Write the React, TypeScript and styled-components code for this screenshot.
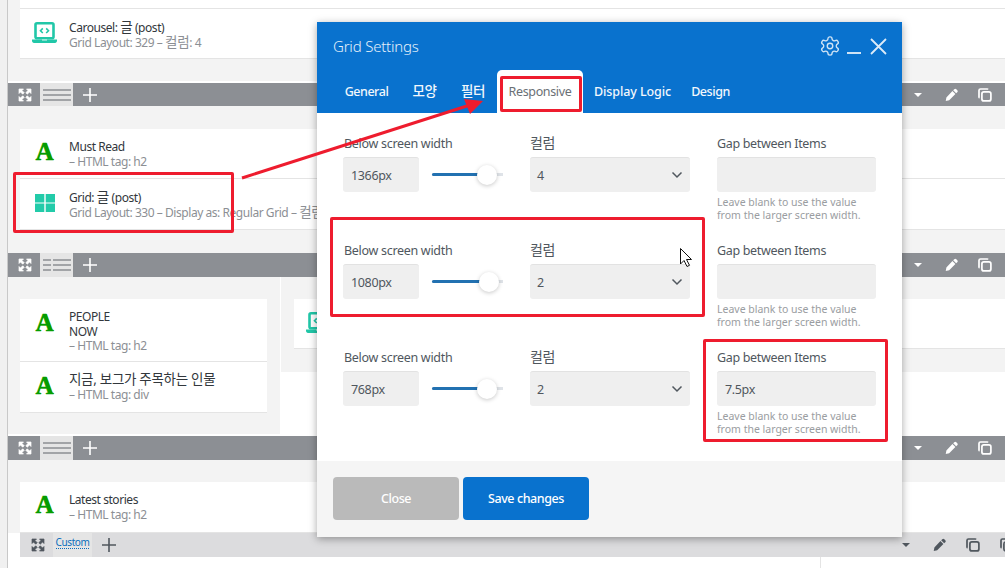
import React from "react";
import styled, { createGlobalStyle } from "styled-components";

const Global = createGlobalStyle`
  html, body { margin: 0; padding: 0; height: 568px; overflow: hidden; background: #fff; }
  * { box-sizing: border-box; }
  body { font-family: "Noto Sans", "Noto Sans CJK KR", sans-serif; }
`;

const Page = styled.div`
  position: relative;
  width: 1005px;
  height: 568px;
  overflow: hidden;
  display: flex;
`;
const SideEdge = styled.div`
  width: 8px;
  flex: none;
  background: #f0f0f0;
  border-right: 1px solid #c8c8c8;
`;
const Main = styled.div`
  flex: 1;
  min-width: 0;
  display: flex;
  flex-direction: column;
`;
const Section = styled.section<{ $h: number; $top: number }>`
  height: ${(p) => p.$h}px;
  padding: ${(p) => p.$top}px 0 0 12px;
  background: #f3f3f3;
  flex: none;
`;
const Columns = styled.div`
  height: 157px;
  flex: none;
  display: flex;
  background: #fff;
`;
const LeftCol = styled.div`
  width: 272px;
  height: 157px;
  padding: 22px 13px 0 12px;
  background: #f3f3f3;
`;
const RightCol = styled.div`
  margin-left: 1px;
  flex: 1;
  height: 95px;
  padding: 22px 0 0 13px;
  background: #f3f3f3;
`;
const Card = styled.div<{ $h: number; $pt?: number }>`
  height: ${(p) => p.$h}px;
  display: flex;
  align-items: flex-start;
  padding-top: ${(p) => p.$pt ?? 11}px;
  background: #fff;
  border-bottom: 1px solid #e4e4e4;
  overflow: hidden;
  white-space: nowrap;
`;
const IconSlot = styled.div<{ $mt?: number }>`
  width: 49px;
  flex: none;
  display: flex;
  justify-content: center;
  margin-top: ${(p) => p.$mt ?? 0}px;
`;
const AGlyph = styled.span`
  font-family: "Liberation Serif", serif;
  font-weight: 700;
  font-size: 25px;
  line-height: 28px;
  color: #039c03;
  -webkit-text-stroke: 0.4px #039c03;
  text-shadow: 0.5px 0 0.5px #a8c400;
`;
const CardText = styled.div`
  font-size: 12px;
  line-height: 14.5px;
`;
const CardTitle = styled.div`
  color: #32373c;
  letter-spacing: -0.45px;
`;
const CardSub = styled.div`
  color: #8c8f94;
  letter-spacing: -0.45px;
`;
const Ko = styled.span<{ $size?: number }>`
  font-size: ${(p) => p.$size ?? 13.5}px;
  line-height: 0;
  letter-spacing: -0.3px;
`;

const Bar = styled.div<{ $mt: number; $h?: number }>`
  height: ${(p) => p.$h ?? 24}px;
  flex: none;
  margin-top: ${(p) => p.$mt}px;
  background: #8c8f94;
  display: flex;
  align-items: center;
  padding: 0 13px 0 10px;
  color: #fff;
`;
const ExpandSlot = styled.div`
  width: 22px;
  display: flex;
  justify-content: flex-start;
`;
const ListTile = styled.div`
  width: 33px;
  height: 100%;
  background: #e5e5e5;
  display: flex;
  align-items: center;
  justify-content: center;
`;
const PlusSlot = styled.div`
  margin-left: 10px;
  display: flex;
`;
const Tools = styled.div`
  margin-left: auto;
  display: flex;
  align-items: center;
  gap: 20px;
`;
const CaretSlot = styled.div`
  display: flex;
  margin-right: 3px;
`;

const SubBar = styled.div`
  height: 24px;
  margin-left: 12px;
  flex: none;
  background: #dcdcde;
  display: flex;
  align-items: center;
  padding: 0 0 0 11px;
  color: #50575e;
  width: 1000px;
`;
const CustomTile = styled.div`
  width: 39px;
  height: 24px;
  background: #e5e5e5;
  display: flex;
  align-items: flex-start;
  justify-content: center;
  padding-top: 3px;
`;
const CustomLink = styled.span`
  font-size: 10px;
  line-height: 12px;
  color: #0a6ebd;
  border-bottom: 1px dotted #0a6ebd;
  letter-spacing: -0.4px;
`;
const SubPlus = styled.div`
  margin-left: 10px;
  display: flex;
`;
const SubTools = styled.div`
  margin-left: 786px;
  display: flex;
  align-items: center;
  gap: 20px;
`;
const Bottom = styled.div`
  flex: 1;
  display: flex;
  justify-content: flex-end;
`;
const BottomRule = styled.div`
  width: 185px;
  border-left: 1px solid #e4e4e4;
`;

/* Modal */
const Modal = styled.div`
  position: absolute;
  left: 317px;
  top: 22px;
  width: 585px;
  height: 515px;
  background: #fff;
  box-shadow: 0 2px 8px rgba(0, 0, 0, 0.35);
  display: flex;
  flex-direction: column;
`;
const Header = styled.div`
  height: 91px;
  flex: none;
  background: #0972ce;
  display: flex;
  flex-direction: column;
  color: #fff;
`;
const TitleRow = styled.div`
  height: 48px;
  display: flex;
  align-items: center;
  padding: 0 15px 0 16px;
`;
const Title = styled.div`
  font-size: 15px;
  font-weight: 300;
  color: #e4f0fa;
  letter-spacing: -0.2px;
`;
const HeadIcons = styled.div`
  margin-left: auto;
  display: flex;
  align-items: center;
`;
const Tabs = styled.div`
  margin-top: auto;
  height: 43px;
  display: flex;
  padding-left: 16px;
`;
const Tab = styled.div<{ $active?: boolean; $w: number; $ls?: number }>`
  width: ${(p) => p.$w}px;
  flex: none;
  height: 43px;
  padding-top: 13px;
  text-align: center;
  font-size: 12.5px;
  line-height: 18px;
  font-weight: ${(p) => (p.$active ? 400 : 500)};
  letter-spacing: ${(p) => p.$ls ?? -0.45}px;
  white-space: nowrap;
  border-radius: 5px 5px 0 0;
  color: ${(p) => (p.$active ? "#6a6f75" : "#f2f7fc")};
  background: ${(p) => (p.$active ? "#fff" : "transparent")};
`;
const Body = styled.div`
  flex: 1;
  padding: 21px 0 0 26px;
  display: flex;
  flex-direction: column;
`;
const Row = styled.div`
  height: 107px;
  flex: none;
  display: grid;
  grid-template-columns: 187px 187px 160px;
  align-items: start;
`;
const Label = styled.div`
  font-size: 12.5px;
  line-height: 18px;
  color: #50575e;
  letter-spacing: -0.3px;
  margin: 1px 0 4px 1px;
  white-space: nowrap;
`;
const KoLabel = styled(Label)`
  margin-left: 0;
`;
const GapLabel = styled(Label)`
  margin-left: 0;
  letter-spacing: -0.33px;
`;
const Inline = styled.div`
  display: flex;
  align-items: center;
  gap: 13px;
`;
const Input = styled.div<{ $w: number }>`
  width: ${(p) => p.$w}px;
  height: 35px;
  flex: none;
  padding: 0 8px;
  background: #efefef;
  border-radius: 3px;
  border-top: 1px solid #e2e2e2;
  display: flex;
  align-items: center;
  font-size: 12.5px;
  letter-spacing: -0.35px;
  color: #50575e;
`;
const Select = styled(Input)`
  justify-content: space-between;
  padding-left: 7px;
  padding-right: 7px;
`;
const Slider = styled.div`
  position: relative;
  width: 71px;
  height: 3px;
  background: #dfe3e8;
`;
const SliderFill = styled.div`
  height: 3px;
  background: #2271b1;
  border-radius: 2px;
`;
const Knob = styled.div`
  position: absolute;
  top: -8px;
  width: 20px;
  height: 20px;
  margin-left: -10px;
  border-radius: 50%;
  background: #fff;
  box-shadow: 0 1px 4px rgba(0, 0, 0, 0.22);
`;
const Help = styled.div`
  margin-top: 4px;
  font-size: 10.5px;
  line-height: 13.3px;
  color: #9a9da1;
  white-space: nowrap;
`;
const Footer = styled.div`
  height: 76px;
  margin-top: auto;
  flex: none;
  background: #f5f5f5;
  padding: 16px;
  display: flex;
  gap: 4px;
`;
const Btn = styled.div<{ $primary?: boolean }>`
  width: 126px;
  height: 43px;
  border-radius: 4px;
  background: ${(p) => (p.$primary ? "#0972ce" : "#bababa")};
  color: #fff;
  display: flex;
  align-items: center;
  justify-content: center;
  font-size: 12.5px;
  letter-spacing: -0.42px;
  font-weight: 500;
`;

/* annotations */
const RedBox = styled.div<{ $x: number; $y: number; $w: number; $h: number }>`
  position: absolute;
  left: ${(p) => p.$x}px;
  top: ${(p) => p.$y}px;
  width: ${(p) => p.$w}px;
  height: ${(p) => p.$h}px;
  border: 3px solid #ee1c2e;
  border-radius: 2px;
`;
const Overlay = styled.svg`
  position: absolute;
  left: 0;
  top: 0;
  pointer-events: none;
`;
const MinusIcon = styled.svg`
  margin-left: 6px;
`;
const CrossIcon = styled.svg`
  margin-left: 9px;
`;

const Expand = ({ c = "#fff" }: { c?: string }) => (
  <svg width="14" height="14" viewBox="0 0 14 14" fill={c} stroke={c} strokeWidth="0.7">
    <path d="M1 1h4.500L4 2.500 6.200 4.700 4.700 6.200 2.500 4 1 5.500zM13 1v4.500L11.500 4 9.300 6.200 7.800 4.700 10 2.500 8.500 1zM1 13V8.500L2.500 10l2.200-2.200 1.500 1.500L4 11.500 5.500 13zM13 13H8.500l1.500-1.500-2.200-2.200 1.500-1.500 2.200 2.200L13 8.500z" />
  </svg>
);
const Plus = ({ c = "#fff" }: { c?: string }) => (
  <svg width="14" height="14" viewBox="0 0 14 14" stroke={c} strokeWidth="1.6">
    <path d="M7 0v14M0 7h14" />
  </svg>
);
const Lines = ({ split }: { split?: boolean }) => (
  <svg width="28" height="14" viewBox="0 0 28 14" stroke="#a2a4a7" strokeWidth="2">
    {[2, 7, 12].map((y) =>
      split ? (
        <g key={y}>
          <path d={`M0 ${y}h8`} />
          <path d={`M10 ${y}h18`} />
        </g>
      ) : (
        <path key={y} d={`M0 ${y}h28`} />
      )
    )}
  </svg>
);
const Caret = ({ c = "#fff" }: { c?: string }) => (
  <svg width="8" height="4" viewBox="0 0 8 4" fill={c}>
    <path d="M0 0h8L4 4z" />
  </svg>
);
const Pencil = ({ c = "#fff" }: { c?: string }) => (
  <svg width="13" height="14" viewBox="0 0 14 14" fill={c}>
    <path d="M10 .8a1.600 1.600 0 0 1 2.200 0l1 1a1.600 1.600 0 0 1 0 2.200L12 5.200 8.800 2zM8 2.800 11.200 6l-6.700 6.700L.8 13.400l.7-3.800z" />
  </svg>
);
const Copy = ({ c = "#fff" }: { c?: string }) => (
  <svg width="14" height="14" viewBox="0 0 14 14" fill="none" stroke={c} strokeWidth="1.7">
    <path d="M10 1.500A1 1 0 0 0 9 1H2.500A1.500 1.500 0 0 0 1 2.500V9a1 1 0 0 0 .6.9" />
    <rect x="3.900" y="3.900" width="9" height="9" rx="2" />
  </svg>
);
const Chevron = () => (
  <svg width="12" height="8" viewBox="0 0 12 8" fill="none" stroke="#50575e" strokeWidth="1.500">
    <path d="M1.500 1.500 6 6l4.500-4.500" />
  </svg>
);
const Laptop = () => (
  <svg width="25" height="21" viewBox="0 0 25 21">
    <rect x="3.500" y="1.300" width="18" height="15" rx="1.500" fill="#fff" stroke="#21c7a8" strokeWidth="2.600" />
    <path d="M10.800 6.400 8.500 8.700l2.300 2.300M14.200 6.400l2.300 2.300-2.300 2.300" fill="none" stroke="#21c7a8" strokeWidth="1.600" />
    <path d="M0 17.500h25v1c0 1.400-.8 2.500-2 2.500H2c-1.200 0-2-1.100-2-2.500z" fill="#21c7a8" />
    <path d="M10 17.500h5v1h-5z" fill="#dff7f2" />
  </svg>
);
const GridIcon = () => (
  <svg width="20" height="18" viewBox="0 0 20 18" fill="#22cba9">
    <rect x="0" y="0" width="9.300" height="8.500" />
    <rect x="10.700" y="0" width="9.300" height="8.500" />
    <rect x="0" y="9.500" width="9.300" height="8.500" />
    <rect x="10.700" y="9.500" width="9.300" height="8.500" />
  </svg>
);
const Gear = () => (
  <svg width="22" height="22" viewBox="0 0 24 24" fill="none" stroke="#cfe3f5" strokeWidth="1.500" strokeLinecap="round" strokeLinejoin="round">
    <path d="M12.220 2h-.44a2 2 0 0 0-2 2v.18a2 2 0 0 1-1 1.730l-.43.25a2 2 0 0 1-2 0l-.15-.08a2 2 0 0 0-2.730.73l-.22.380a2 2 0 0 0 .73 2.730l.15.100a2 2 0 0 1 1 1.720v.510a2 2 0 0 1-1 1.740l-.15.090a2 2 0 0 0-.73 2.730l.22.380a2 2 0 0 0 2.730.73l.15-.08a2 2 0 0 1 2 0l.43.250a2 2 0 0 1 1 1.730V20a2 2 0 0 0 2 2h.44a2 2 0 0 0 2-2v-.18a2 2 0 0 1 1-1.730l.43-.25a2 2 0 0 1 2 0l.15.080a2 2 0 0 0 2.730-.73l.22-.390a2 2 0 0 0-.73-2.730l-.15-.080a2 2 0 0 1-1-1.740v-.500a2 2 0 0 1 1-1.740l.15-.090a2 2 0 0 0 .73-2.730l-.22-.380a2 2 0 0 0-2.730-.73l-.15.080a2 2 0 0 1-2 0l-.43-.250a2 2 0 0 1-1-1.730V4a2 2 0 0 0-2-2z" />
    <circle cx="12" cy="12" r="3" />
  </svg>
);
const Minus = () => (
  <MinusIcon width="14" height="22" viewBox="0 0 14 22" stroke="#cfe3f5" strokeWidth="2">
    <path d="M0 18h14" />
  </MinusIcon>
);
const Cross = () => (
  <CrossIcon width="17" height="17" viewBox="0 0 17 17" stroke="#dcebf8" strokeWidth="1.800">
    <path d="M1 1l15 15M16 1 1 16" />
  </CrossIcon>
);

const ToolSet = ({ c }: { c?: string }) => (
  <>
    <CaretSlot>
      <Caret c={c} />
    </CaretSlot>
    <Pencil c={c} />
    <Copy c={c} />
  </>
);

const ToolBar = ({ mt, split, h }: { mt: number; split?: boolean; h?: number }) => (
  <Bar $mt={mt} $h={h}>
    <ExpandSlot>
      <Expand />
    </ExpandSlot>
    <ListTile>
      <Lines split={split} />
    </ListTile>
    <PlusSlot>
      <Plus />
    </PlusSlot>
    <Tools>
      <ToolSet />
    </Tools>
  </Bar>
);

const A = ({ mt = -2 }: { mt?: number }) => (
  <IconSlot $mt={mt}>
    <AGlyph>A</AGlyph>
  </IconSlot>
);

const rows = [
  { w: "1366px", c: "4", gap: "", knob: 55 },
  { w: "1080px", c: "2", gap: "", knob: 57 },
  { w: "768px", c: "2", gap: "7.5px", knob: 55 },
];

export default function App() {
  return (
    <Page>
      <Global />
      <SideEdge />
      <Main>
        <Section $h={81} $top={0}>
          <Card $h={9} $pt={0} />
          <Card $h={50} $pt={12}>
            <IconSlot $mt={1}>
              <Laptop />
            </IconSlot>
            <CardText>
              <CardTitle>
                Carousel: <Ko>글</Ko> (post)
              </CardTitle>
              <CardSub>
                Grid Layout: 329 – <Ko>컬럼</Ko>: 4
              </CardSub>
            </CardText>
          </Card>
        </Section>
        <ToolBar mt={2} h={23} />
        <Section $h={147} $top={23}>
          <Card $h={50}>
            <A />
            <CardText>
              <CardTitle>Must Read</CardTitle>
              <CardSub>– HTML tag: h2</CardSub>
            </CardText>
          </Card>
          <Card $h={51} $pt={12}>
            <IconSlot $mt={3}>
              <GridIcon />
            </IconSlot>
            <CardText>
              <CardTitle>
                Grid: <Ko>글</Ko> (post)
              </CardTitle>
              <CardSub>
                Grid Layout: 330 – Display as: Regular Grid – <Ko>컬럼</Ko>: 4
              </CardSub>
            </CardText>
          </Card>
        </Section>
        <ToolBar mt={0} split />
        <Columns>
          <LeftCol>
            <Card $h={63}>
              <A mt={-1} />
              <CardText>
                <CardTitle>
                  PEOPLE
                  <br />
                  NOW
                </CardTitle>
                <CardSub>– HTML tag: h2</CardSub>
              </CardText>
            </Card>
            <Card $h={51}>
              <A mt={-1} />
              <CardText>
                <CardTitle>
                  <Ko>지금, 보그가 주목하는 인물</Ko>
                </CardTitle>
                <CardSub>– HTML tag: div</CardSub>
              </CardText>
            </Card>
          </LeftCol>
          <RightCol>
            <Card $h={50} $pt={12}>
              <IconSlot $mt={1}>
                <Laptop />
              </IconSlot>
            </Card>
          </RightCol>
        </Columns>
        <ToolBar mt={2} />
        <Section $h={73} $top={22}>
          <Card $h={51}>
            <A />
            <CardText>
              <CardTitle>Latest stories</CardTitle>
              <CardSub>– HTML tag: h2</CardSub>
            </CardText>
          </Card>
        </Section>
        <SubBar>
          <ExpandSlot>
            <Expand c="#50575e" />
          </ExpandSlot>
          <CustomTile>
            <CustomLink>Custom</CustomLink>
          </CustomTile>
          <SubPlus>
            <Plus c="#50575e" />
          </SubPlus>
          <SubTools>
            <ToolSet c="#50575e" />
            <Copy c="#50575e" />
          </SubTools>
        </SubBar>
        <Bottom>
          <BottomRule />
        </Bottom>
      </Main>

      <Modal>
        <Header>
          <TitleRow>
            <Title>Grid Settings</Title>
            <HeadIcons>
              <Gear />
              <Minus />
              <Cross />
            </HeadIcons>
          </TitleRow>
          <Tabs>
            <Tab $w={67}>General</Tab>
            <Tab $w={49}>
              <Ko>모양</Ko>
            </Tab>
            <Tab $w={48}>
              <Ko>필터</Ko>
            </Tab>
            <Tab $w={86} $active $ls={-0.35}>
              Responsive
            </Tab>
            <Tab $w={99} $ls={-0.08}>
              Display Logic
            </Tab>
            <Tab $w={57}>Design</Tab>
          </Tabs>
        </Header>
        <Body>
          {rows.map((r) => (
            <Row key={r.w}>
              <div>
                <Label>Below screen width</Label>
                <Inline>
                  <Input $w={76}>{r.w}</Input>
                  <Slider>
                    <SliderFill style={{ width: `${r.knob}px` }} />
                    <Knob style={{ left: `${r.knob}px` }} />
                  </Slider>
                </Inline>
              </div>
              <div>
                <KoLabel>
                  <Ko $size={14}>컬럼</Ko>
                </KoLabel>
                <Select $w={160}>
                  {r.c}
                  <Chevron />
                </Select>
              </div>
              <div>
                <GapLabel>Gap between Items</GapLabel>
                <Input $w={159}>{r.gap}</Input>
                <Help>
                  Leave blank to use the value
                  <br />
                  from the larger screen width.
                </Help>
              </div>
            </Row>
          ))}
        </Body>
        <Footer>
          <Btn>Close</Btn>
          <Btn $primary>Save changes</Btn>
        </Footer>
      </Modal>

      <RedBox $x={13} $y={172} $w={221} $h={61} />
      <RedBox $x={500} $y={76} $w={82} $h={36} />
      <RedBox $x={330} $y={217} $w={375} $h={100} />
      <RedBox $x={703} $y={339} $w={185} $h={103} />
      <Overlay width="1005" height="568" viewBox="0 0 1005 568">
        <path d="M242 178 470 105" stroke="#ee1c2e" strokeWidth="3" fill="none" />
        <path d="M483 101 464 99 470 114z" fill="#ee1c2e" />
      </Overlay>
      <Overlay width="1005" height="568" viewBox="0 0 1005 568">
        <path d="M680.500 248.500v15.500l3.500-3.500 3 6 2.500-1.200-3-5.800h5z" fill="#fff" stroke="#111" strokeWidth="1" />
      </Overlay>
    </Page>
  );
}
